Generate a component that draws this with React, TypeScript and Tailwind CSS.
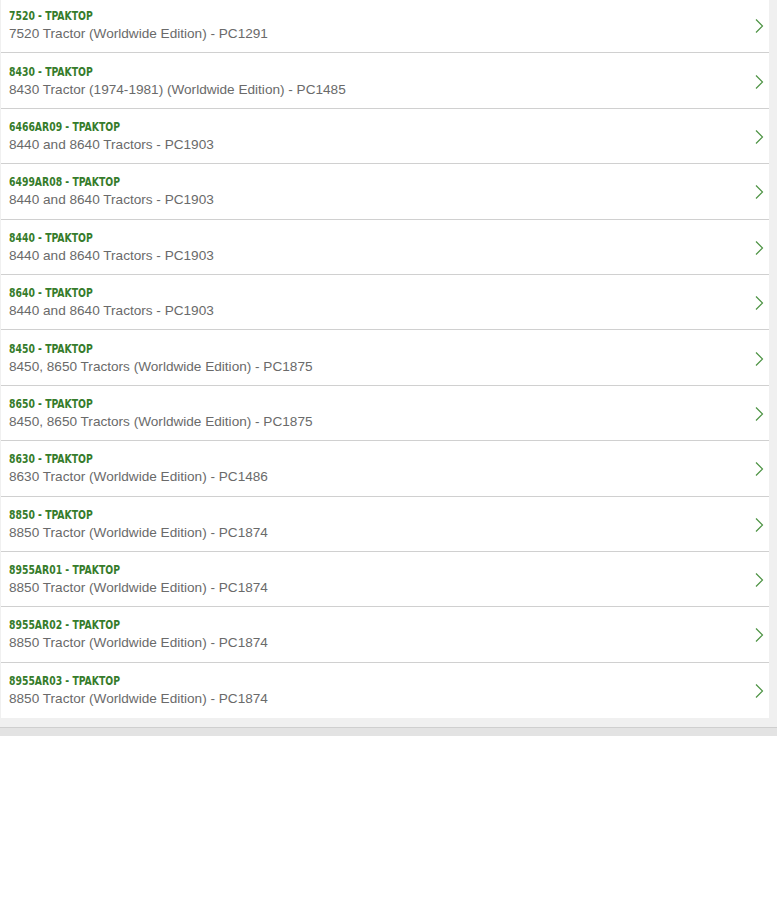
import React from "react";

const items = [
  { code: "7520", desc: "7520 Tractor (Worldwide Edition) - PC1291" },
  { code: "8430", desc: "8430 Tractor (1974-1981) (Worldwide Edition) - PC1485" },
  { code: "6466AR09", desc: "8440 and 8640 Tractors - PC1903" },
  { code: "6499AR08", desc: "8440 and 8640 Tractors - PC1903" },
  { code: "8440", desc: "8440 and 8640 Tractors - PC1903" },
  { code: "8640", desc: "8440 and 8640 Tractors - PC1903" },
  { code: "8450", desc: "8450, 8650 Tractors (Worldwide Edition) - PC1875" },
  { code: "8650", desc: "8450, 8650 Tractors (Worldwide Edition) - PC1875" },
  { code: "8630", desc: "8630 Tractor (Worldwide Edition) - PC1486" },
  { code: "8850", desc: "8850 Tractor (Worldwide Edition) - PC1874" },
  { code: "8955AR01", desc: "8850 Tractor (Worldwide Edition) - PC1874" },
  { code: "8955AR02", desc: "8850 Tractor (Worldwide Edition) - PC1874" },
  { code: "8955AR03", desc: "8850 Tractor (Worldwide Edition) - PC1874" },
];

function Chevron() {
  return (
    <svg width="9" height="14" viewBox="0 0 9 14" className="shrink-0">
      <path d="M1 0.5 L7.5 7 L1 13.5" fill="none" stroke="#4e9445" strokeWidth="1.2" />
    </svg>
  );
}

export default function App() {
  return (
    <div className="w-[777px] bg-white font-['Liberation_Sans']">
      <div className="overflow-hidden bg-[#f0f0f0] pl-px pr-[8px] pb-[9px]">
        <ul className="-mt-[2px] bg-white">
          {items.map((it, i) => (
            <li
              key={i}
              className={
                "flex h-[55.4px] items-center justify-between pl-[8px] pr-[5px] " +
                (i < items.length - 1 ? "border-b border-[#d0d0d0]" : "")
              }
            >
              <div className="flex flex-col items-start">
                <span className="inline-block origin-left scale-x-[0.86] font-['DejaVu_Sans_Condensed'] text-[12px] font-bold leading-[17px] text-[#367c2b]">
                  {it.code} - TPAKTOP
                </span>
                <span className="text-[13.6px] leading-[17px] text-[#6a6a6a]">{it.desc}</span>
              </div>
              <div className="mt-[2px]">
                <Chevron />
              </div>
            </li>
          ))}
        </ul>
      </div>
      <div className="h-[9px] border-t border-[#cfcfcf] bg-[#e3e3e3]" />
    </div>
  );
}
